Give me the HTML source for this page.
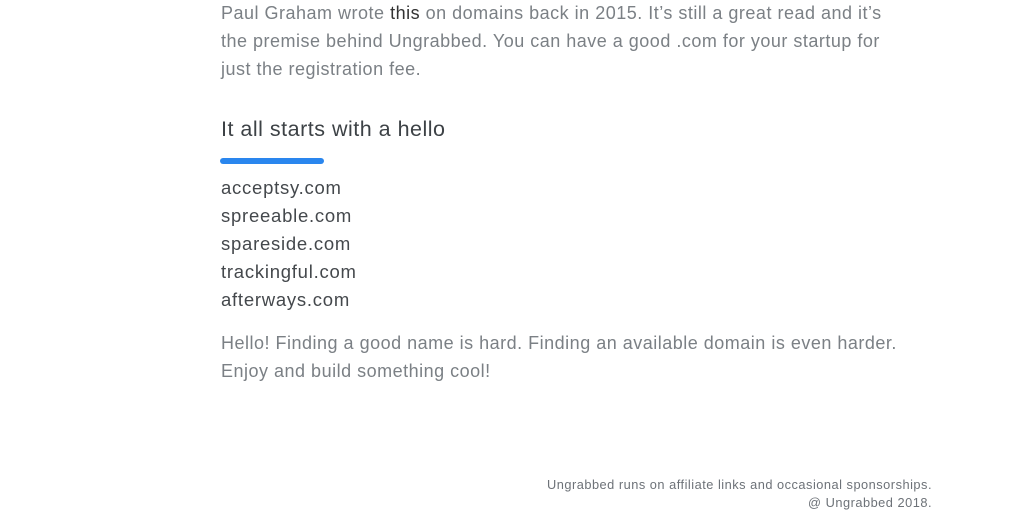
<!DOCTYPE html>
<html><head><style>
body{margin:0;width:1017px;height:528px;background:#fff;font-family:"Liberation Sans",sans-serif;position:relative;overflow:hidden}
.p{position:absolute;left:221px;font-size:18px;line-height:28px;color:#7b8085;letter-spacing:0.5px;white-space:nowrap}
.p b{font-weight:normal;color:#333}
h2{position:absolute;left:221px;top:117px;margin:0;font-weight:normal;font-size:21.5px;color:#3d4246;letter-spacing:0.5px}
.bar{position:absolute;left:220px;top:158px;width:104px;height:6px;border-radius:3px;background:#2a86ee}
.d{position:absolute;left:221px;top:174px;font-size:18.5px;line-height:28px;color:#44484c;letter-spacing:0.75px}
.f{position:absolute;right:85px;top:476px;font-size:12.8px;line-height:18px;color:#6d7278;text-align:right;letter-spacing:0.5px}
</style></head><body>
<div class="p" style="top:-1px">Paul Graham wrote <b>this</b> on domains back in 2015. It’s still a great read and it’s<br>the premise behind Ungrabbed. You can have a good .com for your startup for<br>just the registration fee.</div>
<h2>It all starts with a hello</h2>
<div class="bar"></div>
<div class="d">acceptsy.com<br>spreeable.com<br>spareside.com<br>trackingful.com<br>afterways.com</div>
<div class="p" style="top:329px">Hello! Finding a good name is hard. Finding an available domain is even harder.<br>Enjoy and build something cool!</div>
<div class="f">Ungrabbed runs on affiliate links and occasional sponsorships.<br>@ Ungrabbed 2018.</div>
</body></html>
